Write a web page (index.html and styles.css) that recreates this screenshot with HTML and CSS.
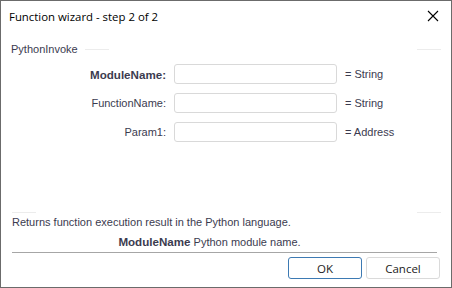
FILE: index.html
```html
<!DOCTYPE html>
<html lang="en">
<head>
    <meta charset="UTF-8">
    <title>Function wizard</title>
    <link rel="stylesheet" href="styles.css">
</head>
<body>
    <div class="window">
        <header class="titlebar">
            <span class="title">Function wizard - step 2 of 2</span>
            <svg class="close" width="12" height="12" viewBox="0 0 12 12">
                <path d="M1 1 L11 11 M11 1 L1 11" stroke="#000" stroke-width="1.1" fill="none"/>
            </svg>
        </header>

        <section class="group">
            <div class="group-head">
                <span class="group-title">PythonInvoke</span>
                <span class="seg seg-a"></span>
                <span class="seg seg-b"></span>
            </div>

            <div class="params">
                <label class="bold">ModuleName:</label>
                <input type="text" class="field">
                <span class="type">= String</span>

                <label>FunctionName:</label>
                <input type="text" class="field">
                <span class="type">= String</span>

                <label>Param1:</label>
                <input type="text" class="field">
                <span class="type">= Address</span>
            </div>

            <div class="group-foot">
                <span class="seg seg-c"></span>
                <span class="seg seg-b"></span>
            </div>
        </section>

        <section class="info">
            <p>Returns function execution result in the Python language.</p>
            <p class="arg"><b>ModuleName</b> Python module name.</p>
        </section>

        <footer class="buttons">
            <button class="btn default">OK</button>
            <button class="btn">Cancel</button>
        </footer>
    </div>
</body>
</html>
```

FILE: styles.css
```css
* {
    margin: 0;
    padding: 0;
    box-sizing: border-box;
}

body {
    font-family: 'Liberation Sans', Arial, sans-serif;
    font-size: 11px;
    color: #3b3b4f;
    background: #fff;
}

.window {
    width: 452px;
    height: 288px;
    border: 1px solid #6b6b6b;
    display: flex;
    flex-direction: column;
}

.titlebar {
    height: 30px;
    display: flex;
    align-items: center;
    justify-content: space-between;
    padding: 0 12px 0 8px;
}

.title {
    font-family: 'Open Sans', sans-serif;
    font-size: 11.4px;
    color: #000;
}

.close {
    display: block;
}

.group {
    height: 182px;
    display: flex;
    flex-direction: column;
}

.group-head {
    display: flex;
    align-items: center;
    height: 32px;
    padding: 4px 10px 0 10px;
}

.seg {
    height: 1px;
    width: 24px;
    background: #ececec;
}

.seg-a {
    margin-left: 7px;
}

.seg-b {
    margin-left: auto;
}

.params {
    display: grid;
    grid-template-columns: 165px 163px auto;
    column-gap: 8px;
    row-gap: 9px;
    align-items: center;
    margin-top: 1px;
}

.params label {
    text-align: right;
}

.params label.bold {
    font-weight: bold;
    font-size: 11.6px;
}

.field {
    height: 20px;
    border: 1px solid #d9d9d9;
    border-radius: 3px;
    outline: none;
}

.group-foot {
    display: flex;
    margin-top: auto;
    padding: 0 10px 0 11px;
}

.info {
    padding: 0 11px 0 11px;
    line-height: 19px;
}

.info .arg {
    text-align: center;
    border-bottom: 1px solid #a6a6a6;
    margin-right: 3px;
    padding-right: 30px;
}

.info .arg b {
    font-size: 11.6px;
}

.buttons {
    display: flex;
    justify-content: flex-end;
    gap: 4px;
    padding: 4px 11px 0 0;
}

.btn {
    width: 74px;
    height: 22px;
    font-family: 'Open Sans', sans-serif;
    font-size: 11.5px;
    color: #222;
    background: #fff;
    border: 1px solid #dadada;
    border-radius: 3px;
}

.btn.default {
    border-color: #3d7ab3;
}
```
